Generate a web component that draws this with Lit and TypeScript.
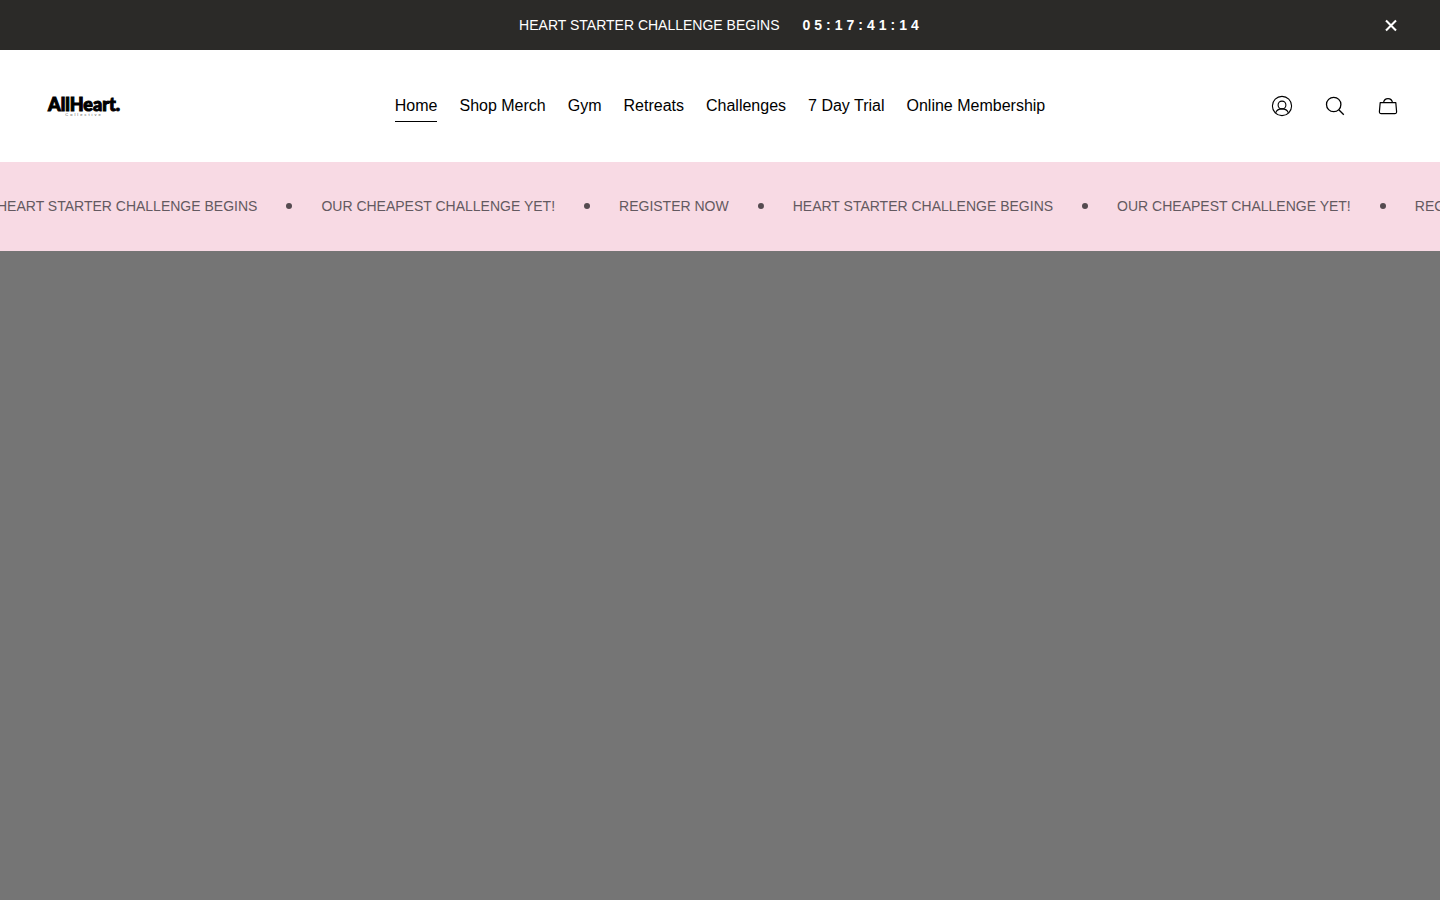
import { LitElement, html, css } from "lit";
import { customElement, state } from "lit/decorators.js";

const LINKS = ["Home", "Shop Merch", "Gym", "Retreats", "Challenges", "7 Day Trial", "Online Membership"];
const MESSAGES = ["HEART STARTER CHALLENGE BEGINS", "OUR CHEAPEST CHALLENGE YET!", "REGISTER NOW"];

@customElement("app-root")
export class AppRoot extends LitElement {
  @state() private current = "Home";
  @state() private countdown = "05:17:41:14";
  @state() private scrolled = 3;

  static styles = css`
    :host {
      display: flex;
      flex-direction: column;
      min-height: 100vh;
      background: #757575;
      color: #000;
      font-family: "Liberation Sans", Arial, sans-serif;
      font-size: 16px;
      line-height: 24px;
    }
    button {
      display: flex;
      padding: 0;
      border: 0;
      background: none;
      color: inherit;
      cursor: pointer;
    }
    svg {
      display: block;
      fill: none;
      stroke: currentColor;
    }
    .announcement {
      display: grid;
      grid-template-columns: 1fr auto 1fr;
      align-items: center;
      padding: 13px 40px;
      background: #2b2a28;
      color: #fff;
      font-size: 14px;
    }
    .message {
      grid-column: 2;
      display: flex;
      gap: 23px;
      padding-right: 2px;
    }
    .countdown {
      display: flex;
      gap: 4px;
      font-weight: 700;
    }
    .close {
      justify-self: end;
    }
    .header {
      display: grid;
      grid-template-columns: 1fr auto 1fr;
      align-items: center;
      padding: 40px;
      background: #fff;
    }
    .logo {
      justify-self: start;
      display: flex;
      flex-direction: column;
      align-items: center;
      padding-left: 8px;
      color: #000;
      text-decoration: none;
    }
    .name {
      font: 900 18px/18px Lato, sans-serif;
      -webkit-text-stroke: 1px #000;
    }
    .tagline {
      font: 4px/4px "Liberation Sans", sans-serif;
      letter-spacing: 2px;
      color: #555;
    }
    .nav {
      display: flex;
      gap: 22px;
    }
    .link {
      padding: 4px 0 3px;
      border-bottom: 1px solid transparent;
      color: #000;
      text-decoration: none;
      white-space: nowrap;
    }
    .link.active {
      border-color: #000;
    }
    .tools {
      justify-self: end;
      display: flex;
      gap: 29px;
    }
    .marquee {
      overflow: hidden;
      padding: 32px 0 33px;
      background: #f8dae4;
      color: #635960;
      font-size: 14px;
    }
    .track {
      display: flex;
      width: max-content;
    }
    .item {
      display: flex;
      align-items: center;
      white-space: nowrap;
    }
    .dot {
      width: 6px;
      height: 6px;
      margin: 0 29px;
      border-radius: 50%;
      background: #554b50;
    }
    .hero {
      flex: 1;
      background: #757575;
    }
  `;

  render() {
    return html`
      <div class="announcement">
        <div class="message">
          <span>HEART STARTER CHALLENGE BEGINS</span>
          <span class="countdown">${[...this.countdown].map((c) => html`<span>${c}</span>`)}</span>
        </div>
        <button class="close" aria-label="Close">
          <svg width="18" height="18" viewBox="0 0 18 18" stroke-width="2.1"><path d="M4 4.500l10 10M14 4.500L4 14.500" /></svg>
        </button>
      </div>
      <header class="header">
        <a class="logo" href="#">
          <span class="name">AllHeart.</span>
          <span class="tagline">Collective</span>
        </a>
        <nav class="nav">
          ${LINKS.map(
            (name) => html`<a class="link ${name === this.current ? "active" : ""}" href="#"
              @click=${() => (this.current = name)}>${name}</a>`
          )}
        </nav>
        <div class="tools">
          <button aria-label="Account">
            <svg width="24" height="24" viewBox="0 0 24 24" stroke-width="1.100">
              <circle cx="12" cy="12" r="9.600" />
              <circle cx="12" cy="11" r="3.900" />
              <path d="M5.600 19c.9-2.700 2.800-4.100 6.400-4.100s5.500 1.400 6.400 4.100" />
            </svg>
          </button>
          <button aria-label="Search">
            <svg width="24" height="24" viewBox="0 0 24 24" stroke-width="1.300">
              <circle cx="10.700" cy="10.500" r="7.200" />
              <path d="M15.800 15.700l5 5" />
            </svg>
          </button>
          <button aria-label="Cart">
            <svg width="24" height="24" viewBox="0 0 24 24" stroke-width="1.200">
              <path d="M4.200 8.600h15.600l.8 9q.1 2-1.900 2H5.300q-2 0-1.900-2z" stroke-linejoin="round" />
              <path d="M7.500 8.600C8 6 9.700 4.600 12 4.600s4 1.400 4.500 4" />
            </svg>
          </button>
        </div>
      </header>
      <section class="marquee">
        <div class="track" style="transform: translateX(${-this.scrolled}px)">
          ${[...MESSAGES, ...MESSAGES].map(
            (m) => html`<div class="item"><span>${m}</span><span class="dot"></span></div>`
          )}
        </div>
      </section>
      <main class="hero"></main>
    `;
  }
}
